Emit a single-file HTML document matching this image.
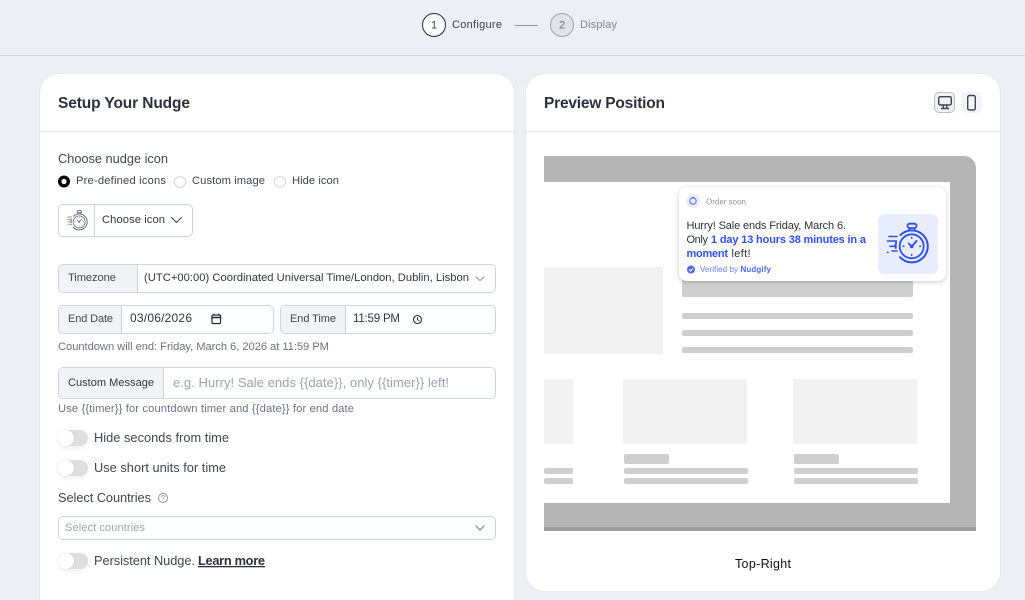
<!DOCTYPE html>
<html lang="en"><head><meta charset="utf-8"><title>Setup Your Nudge</title>
<style>
html,body{margin:0;padding:0;width:1025px;height:600px;overflow:hidden;background:#eceff3;font-family:"Liberation Sans",sans-serif}
#w{position:relative;width:1025px;height:600px;overflow:hidden}
.a{position:absolute;box-sizing:border-box}
.card{background:#fff;border:1px solid #e6e9ed;border-radius:20px}
.box{background:#fff;border:1px solid #cfd3da;border-radius:5px}
.add{background:#f1f3f6;border-right:1px solid #cfd3da;border-radius:4px 0 0 4px;top:0;left:0;bottom:0}
.g{background:#f1f1f1}.b{background:#cfcfcf;border-radius:2px}
.tg{width:30px;height:16px;left:58px;background:#dcdee2;border-radius:8px;box-shadow:0 3px 6px rgba(0,0,0,.05)}
.tg:after{content:"";position:absolute;left:0;top:0;width:16px;height:16px;border-radius:50%;background:#fff;box-shadow:0 0 2px rgba(0,0,0,.1)}
svg{display:block}
svg text{font-family:"Liberation Sans",sans-serif}
</style></head><body><div id="w">
<div class="a" style="left:0;top:55px;width:1025px;height:1px;background:#d3d6da"></div>
<div class="a" style="left:422px;top:13px;width:24px;height:24px;border-radius:50%;background:#fff;border:1.3px solid #1f2937"></div>
<div class="a" style="left:515px;top:25px;width:23px;height:1px;background:#8a93a1"></div>
<div class="a" style="left:550px;top:13px;width:24px;height:24px;border-radius:50%;background:#dfe2e8;border:1px solid #9ca3af"></div>

<div class="a card" style="left:39px;top:73px;width:476px;height:527px;border-bottom:0;border-radius:20px 20px 0 0"></div>
<div class="a" style="left:40px;top:131px;width:474px;height:1px;background:#e2e5ea"></div>
<div class="a card" style="left:525px;top:73px;width:476px;height:519px"></div>
<div class="a" style="left:526px;top:131px;width:474px;height:1px;background:#e2e5ea"></div>

<div class="a" style="left:934px;top:92px;width:21px;height:21px;background:#eff1f4;border:1px solid #b9bdc4;border-radius:5px"></div>
<div class="a" style="left:961px;top:92px;width:21px;height:21px;background:#f1f3f6;border-radius:5px"></div>

<!-- preview -->
<div class="a" style="left:544px;top:156px;width:432px;height:375px;background:#b5b5b5;border-radius:0 12px 0 0;overflow:hidden">
  <div class="a" style="left:0;bottom:0;width:432px;height:4px;background:#a0a0a0"></div>
  <div class="a" style="left:0;top:26px;width:406px;height:321px;background:#fff"></div>
  <div class="a g" style="left:0;top:111px;width:119px;height:87px"></div>
  <div class="a b" style="left:138px;top:100px;width:231px;height:41px"></div>
  <div class="a b" style="left:138px;top:157px;width:231px;height:6px"></div>
  <div class="a b" style="left:138px;top:174px;width:231px;height:6px"></div>
  <div class="a b" style="left:138px;top:191px;width:231px;height:6px"></div>
  <div class="a g" style="left:0;top:223px;width:29px;height:65px"></div>
  <div class="a g" style="left:79px;top:223px;width:124px;height:65px"></div>
  <div class="a g" style="left:249px;top:223px;width:124px;height:65px"></div>
  <div class="a b" style="left:0;top:312px;width:29px;height:6px"></div>
  <div class="a b" style="left:0;top:322px;width:29px;height:6px"></div>
  <div class="a b" style="left:80px;top:298px;width:45px;height:10px"></div>
  <div class="a b" style="left:80px;top:312px;width:124px;height:6px"></div>
  <div class="a b" style="left:80px;top:322px;width:124px;height:6px"></div>
  <div class="a b" style="left:250px;top:298px;width:45px;height:10px"></div>
  <div class="a b" style="left:250px;top:312px;width:124px;height:6px"></div>
  <div class="a b" style="left:250px;top:322px;width:124px;height:6px"></div>
</div>
<div class="a" style="left:679px;top:187px;width:267px;height:94px;background:#fff;border-radius:8px;box-shadow:0 1px 5px rgba(0,0,0,.22)"></div>
<div class="a" style="left:878px;top:214px;width:60px;height:60px;background:#e8ecfd;border-radius:6px"></div>
<div class="a" style="left:686px;top:194px;width:14px;height:14px;background:#e8ecfd;border-radius:50%"></div>

<!-- fields -->
<div class="a box" style="left:58px;top:204px;width:135px;height:33px"><div class="a add" style="width:36px;background:#fff"></div></div>
<div class="a box" style="left:58px;top:264px;width:438px;height:29px"><div class="a add" style="width:79px"></div></div>
<div class="a box" style="left:58px;top:305px;width:216px;height:29px"><div class="a add" style="width:63px"></div></div>
<div class="a box" style="left:280px;top:305px;width:216px;height:29px"><div class="a add" style="width:65px"></div></div>
<div class="a box" style="left:58px;top:367px;width:438px;height:32px"><div class="a add" style="width:105px"></div></div>
<div class="a box" style="left:58px;top:516px;width:438px;height:24px"></div>
<div class="a tg" style="top:430px"></div>
<div class="a tg" style="top:460px"></div>
<div class="a tg" style="top:553px"></div>

<svg class="a" style="left:0;top:0" width="1025" height="600" viewBox="0 0 1025 600" xmlns="http://www.w3.org/2000/svg">
<defs>
<symbol id="watch" viewBox="0 0 60 60" fill="none" stroke-linecap="round" stroke-linejoin="round">
  <circle cx="33.700" cy="32.300" r="12" stroke-width="1.800"/>
  <path d="M22.500 21A16 16 0 1 1 22 43.200" stroke-width="2"/>
  <path d="M18 28.500a16 16 0 0 0-.2 5.500" stroke-width="2"/>
  <rect x="29.500" y="9.700" width="9" height="4.300" rx="2" stroke-width="1.800"/>
  <path d="M31.500 14v2.300M36.500 14v2.300" stroke-width="1.800"/>
  <path d="M33.700 32.500l4.800-5.500M33.700 32.500l-3-3" stroke-width="1.900"/>
  <circle cx="33.700" cy="32.500" r="1.200" stroke-width="1.200"/>
  <path d="M33.700 23.500v.8M33.700 40.500v.8M25 32.300h.8M41.800 32.300h.8" stroke-width="1.500"/>
  <path d="M11 22.500h8M9.500 27h9M12 32.300h4.500M14 37h5M9.500 38.300h.5" stroke-width="1.600"/>
</symbol>
</defs>

<!-- stepper -->
<g font-size="11">
<text x="434" y="28.500" text-anchor="middle" fill="#374151">1</text>
<text x="562" y="28.500" text-anchor="middle" fill="#6b7280">2</text>
<text x="452" y="28" fill="#374151" textLength="50">Configure</text>
<text x="580" y="28" fill="#7b8492" textLength="37">Display</text>
</g>

<!-- titles -->
<text x="58" y="108" font-size="15.500" font-weight="700" fill="#2b313b" textLength="132">Setup Your Nudge</text>
<text x="544" y="108" font-size="15.500" font-weight="700" fill="#2b313b" textLength="121">Preview Position</text>

<!-- device icons -->
<g fill="none" stroke="#3f4650" stroke-width="1.400" stroke-linejoin="round" stroke-linecap="round">
<rect x="938.700" y="96.700" width="12.600" height="8.300" rx="1.500"/>
<path d="M941.500 108.500h7M943.500 105.500l-.5 3M946.500 105.500l.5 3"/>
<rect x="967.700" y="95.500" width="7.600" height="14.500" rx="1.800"/>
</g>

<!-- left form text -->
<text x="58" y="163" font-size="12.800" fill="#3f4650" textLength="110">Choose nudge icon</text>
<circle cx="64" cy="181.500" r="4.300" fill="#fff" stroke="#000" stroke-width="3.400"/>
<circle cx="180" cy="182" r="5.500" fill="#fff" stroke="#d4d7dc"/>
<circle cx="280" cy="182" r="5.500" fill="#fff" stroke="#d4d7dc"/>
<g font-size="11.200" fill="#3f4650">
<text x="76" y="184" textLength="90">Pre-defined icons</text>
<text x="192" y="184" textLength="73">Custom image</text>
<text x="292" y="184" textLength="47">Hide icon</text>
<text x="102" y="223" fill="#2f3640" textLength="63">Choose icon</text>
<text x="68" y="281" textLength="48">Timezone</text>
<text x="144" y="281" fill="#2f3640" textLength="325">(UTC+00:00) Coordinated Universal Time/London, Dublin, Lisbon</text>
<text x="68" y="322" textLength="45" font-size="11">End Date</text>
<text x="130" y="322" fill="#2f3640" font-size="12" textLength="62">03/06/2026</text>
<text x="290" y="322" textLength="46" font-size="11">End Time</text>
<text x="353" y="322" fill="#2f3640" font-size="11.500" textLength="47">11:59 PM</text>
<text x="58" y="350" fill="#6b7280" textLength="271">Countdown will end: Friday, March 6, 2026 at 11:59 PM</text>
<text x="68" y="386" fill="#2f3640" font-size="11" textLength="86">Custom Message</text>
<text x="58" y="412" fill="#6b7280" textLength="296">Use {{timer}} for countdown timer and {{date}} for end date</text>
<text x="65" y="531" fill="#a0a4ab" font-size="11" textLength="80">Select countries</text>
</g>
<text x="173" y="387" font-size="13" fill="#9ca3af" textLength="276">e.g. Hurry! Sale ends {{date}}, only {{timer}} left!</text>
<g font-size="12.800" fill="#3f4650">
<text x="94" y="442" textLength="135">Hide seconds from time</text>
<text x="94" y="472" textLength="132">Use short units for time</text>
<text x="58" y="502" textLength="93">Select Countries</text>
<text x="94" y="565" textLength="101">Persistent Nudge.</text>
<text x="198" y="565" font-weight="700" fill="#2b313b" text-decoration="underline" textLength="67">Learn more</text>
</g>

<!-- chevrons & small icons -->
<g fill="none" stroke-linecap="round" stroke-linejoin="round">
<path d="M171.500 217.500l5 5 5-5" stroke="#3f4650" stroke-width="1.100"/>
<path d="M476 277l4 3.500 4-3.500" stroke="#8a8f98" stroke-width="1.100"/>
<path d="M476 526l4 4 4-4" stroke="#8a8f98" stroke-width="1.300"/>
<rect x="212" y="315" width="8.500" height="8.500" rx="1" stroke="#1f2937" stroke-width="1.200"/>
<path d="M212 317.500h8.500" stroke="#1f2937" stroke-width="1.600"/>
<path d="M214 314v1M218.500 314v1" stroke="#1f2937"/>
<circle cx="417.500" cy="319.500" r="4" stroke="#1f2937" stroke-width="1.100"/>
<path d="M417.500 317.500v2.200l1.500 .8" stroke="#1f2937" stroke-width=".9"/>
<circle cx="163" cy="498" r="4.500" stroke="#8a8f98" stroke-width=".9"/>
<path d="M161.500 497c0-2 3-2 3-.2 0 1-1.500 1-1.500 2.200M163 500.300v.1" stroke="#8a8f98" stroke-width=".8"/>
</g>
<use href="#watch" x="62.300" y="205.750" width="30" height="30" stroke="#6b7280"/>

<!-- nudge -->
<use href="#watch" x="878" y="214" width="60" height="60" stroke="#2f50ea"/>
<circle cx="693" cy="201" r="3.200" fill="none" stroke="#5a74ea" stroke-width="1.100"/>
<path d="M692 197.300h2" stroke="#5a74ea"/>
<text x="706" y="204.500" font-size="8" fill="#8b919a" textLength="40">Order soon</text>
<g font-size="11" fill="#2b313b">
<text x="686.500" y="229" textLength="159.500">Hurry! Sale ends Friday, March 6.</text>
<text x="686.500" y="243" textLength="21.500">Only</text>
<text x="711" y="243" font-weight="700" fill="#2f50ea" textLength="155">1 day 13 hours 38 minutes in a</text>
<text x="686.500" y="257" font-weight="700" fill="#2f50ea" textLength="41.500">moment</text>
<text x="731.500" y="257" textLength="19">left!</text>
</g>
<circle cx="691" cy="269.500" r="4" fill="#4d68ea"/>
<path d="M689 269.500l1.500 1.500 2.500-2.700" fill="none" stroke="#fff" stroke-width="1"/>
<text x="700" y="272" font-size="8" fill="#6b80ee" textLength="38">Verified by</text>
<text x="740.500" y="272" font-size="8" font-weight="700" fill="#4d68ea" textLength="30.500">Nudgify</text>

<text x="735" y="568" font-size="12.500" fill="#111" textLength="56">Top-Right</text>
</svg>
</div></body></html>
